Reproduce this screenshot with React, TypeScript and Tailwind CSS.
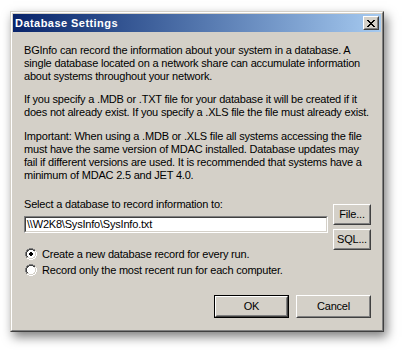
import React from "react";

const FONT = { fontFamily: '"Liberation Sans", Arial, sans-serif' };

function CloseGlyph() {
  const rows = [
    "XX....XX",
    ".XX..XX.",
    "..XXXX..",
    "...XX...",
    "..XXXX..",
    ".XX..XX.",
    "XX....XX",
  ];
  return (
    <svg width="8" height="7" viewBox="0 0 8 7" shapeRendering="crispEdges">
      {rows.flatMap((r, y) =>
        r.split("").map((c, x) =>
          c === "X" ? <rect key={`${x}-${y}`} x={x} y={y} width="1" height="1" fill="#000" /> : null
        )
      )}
    </svg>
  );
}

function Radio({ checked }: { checked: boolean }) {
  const map = [
    "....GGGG....",
    "..GGDDDDGG..",
    ".GDDWWWWDDL.",
    ".GDWWWWWWLH.",
    "GDWWWWWWWWLH",
    "GDWWWWWWWWLH",
    "GDWWWWWWWWLH",
    "GDWWWWWWWWLH",
    ".GDWWWWWWLH.",
    ".GLLWWWWLLH.",
    "..HHLLLLHH..",
    "....HHHH....",
  ];
  const col: Record<string, string> = {
    G: "#808080",
    D: "#404040",
    W: "#ffffff",
    L: "#d4d0c8",
    H: "#ffffff",
  };
  const dot = [".XX.", "XXXX", "XXXX", ".XX."];
  return (
    <svg width="12" height="12" viewBox="0 0 12 12" shapeRendering="crispEdges" className="shrink-0">
      {map.flatMap((r, y) =>
        r.split("").map((c, x) =>
          c !== "." ? <rect key={`${x}-${y}`} x={x} y={y} width="1" height="1" fill={col[c]} /> : null
        )
      )}
      {checked &&
        dot.flatMap((r, y) =>
          r.split("").map((c, x) =>
            c === "X" ? <rect key={`d${x}-${y}`} x={x + 4} y={y + 4} width="1" height="1" fill="#000" /> : null
          )
        )}
    </svg>
  );
}

function Btn({
  children,
  w,
  h,
  isDefault,
}: {
  children: React.ReactNode;
  w: string;
  h: string;
  isDefault?: boolean;
}) {
  const inner = (
    <div className="flex-1 flex border border-t-white border-l-white border-r-[#404040] border-b-[#404040]">
      <div className="flex-1 flex items-center justify-center border border-t-[#d4d0c8] border-l-[#d4d0c8] border-r-[#808080] border-b-[#808080] bg-[#d4d0c8] text-[11px] text-black leading-[13px]">
        {children}
      </div>
    </div>
  );
  return (
    <div className={`${w} ${h} flex ${isDefault ? "border border-black" : ""}`}>{inner}</div>
  );
}

export default function App() {
  return (
    <div className="w-[402px] h-[350px] bg-white pl-[10px] pt-[11px]" style={FONT}>
      <div className="w-[374px] h-[321px] flex border border-t-[#d4d0c8] border-l-[#d4d0c8] border-r-[#404040] border-b-[#404040] shadow-[3px_5px_10px_rgba(0,0,0,0.5)]">
        <div className="flex-1 flex border border-t-white border-l-white border-r-[#808080] border-b-[#808080]">
          <div className="flex-1 flex flex-col p-px bg-[#d4d0c8]">
            {/* Title bar */}
            <div className="h-[18px] flex items-center pl-[2px] pr-[2px] bg-gradient-to-r from-[#0a246a] to-[#a6caf0]">
              <span className="flex-1 text-white font-bold text-[11px] leading-[13px] tracking-[0.45px]">Database Settings</span>
              <div className="w-[16px] h-[14px] flex border border-t-white border-l-white border-r-[#404040] border-b-[#404040]">
                <div className="flex-1 flex items-center justify-center border border-t-[#d4d0c8] border-l-[#d4d0c8] border-r-[#808080] border-b-[#808080] bg-[#d4d0c8]">
                  <CloseGlyph />
                </div>
              </div>
            </div>
            {/* Content */}
            <div className="flex-1 flex flex-col pl-[11px] pr-[9px] pt-[12px] text-[11px] leading-[13px] text-black tracking-[-0.2px]">
              <p className="whitespace-nowrap">
                BGInfo can record the information about your system in a database. A<br />
                single database located on a network share can accumulate information<br />
                about systems throughout your network.
              </p>
              <p className="whitespace-nowrap mt-[10px]">
                If you specify a .MDB or .TXT file for your database it will be created if it<br />
                does not already exist. If you specify a .XLS file the file must already exist.
              </p>
              <p className="whitespace-nowrap mt-[11px]">
                Important: When using a .MDB or .XLS file all systems accessing the file<br />
                must have the same version of MDAC installed. Database updates may<br />
                fail if different versions are used. It is recommended that systems have a<br />
                minimum of MDAC 2.5 and JET 4.0.
              </p>
              <div className="flex mt-[16px] gap-[5px]">
                <div className="flex flex-col w-[304px]">
                  <div className="whitespace-nowrap">Select a database to record information to:</div>
                  <div className="mt-[5px] h-[17px] flex border border-t-[#808080] border-l-[#808080] border-r-white border-b-white">
                    <div className="flex-1 flex items-center pl-[1px] bg-white border border-t-[#404040] border-l-[#404040] border-r-[#d4d0c8] border-b-[#d4d0c8]">
                      {"\\\\W2K8\\SysInfo\\SysInfo.txt"}
                    </div>
                  </div>
                  <div className="mt-[13px] h-[16px] flex items-center gap-[5px] pl-px">
                    <Radio checked />
                    <span className="whitespace-nowrap">Create a new database record for every run.</span>
                  </div>
                  <div className="h-[16px] flex items-center gap-[5px] pl-px">
                    <Radio checked={false} />
                    <span className="whitespace-nowrap">Record only the most recent run for each computer.</span>
                  </div>
                </div>
                <div className="flex flex-col gap-[4px] mt-[6px]">
                  <Btn w="w-[38px]" h="h-[21px]">File...</Btn>
                  <Btn w="w-[38px]" h="h-[21px]">SQL...</Btn>
                </div>
              </div>
              <div className="flex justify-end gap-[7px] mt-[17px] pr-px">
                <Btn w="w-[75px]" h="h-[23px]" isDefault>
                  OK
                </Btn>
                <Btn w="w-[75px]" h="h-[23px]">Cancel</Btn>
              </div>
            </div>
          </div>
        </div>
      </div>
    </div>
  );
}
